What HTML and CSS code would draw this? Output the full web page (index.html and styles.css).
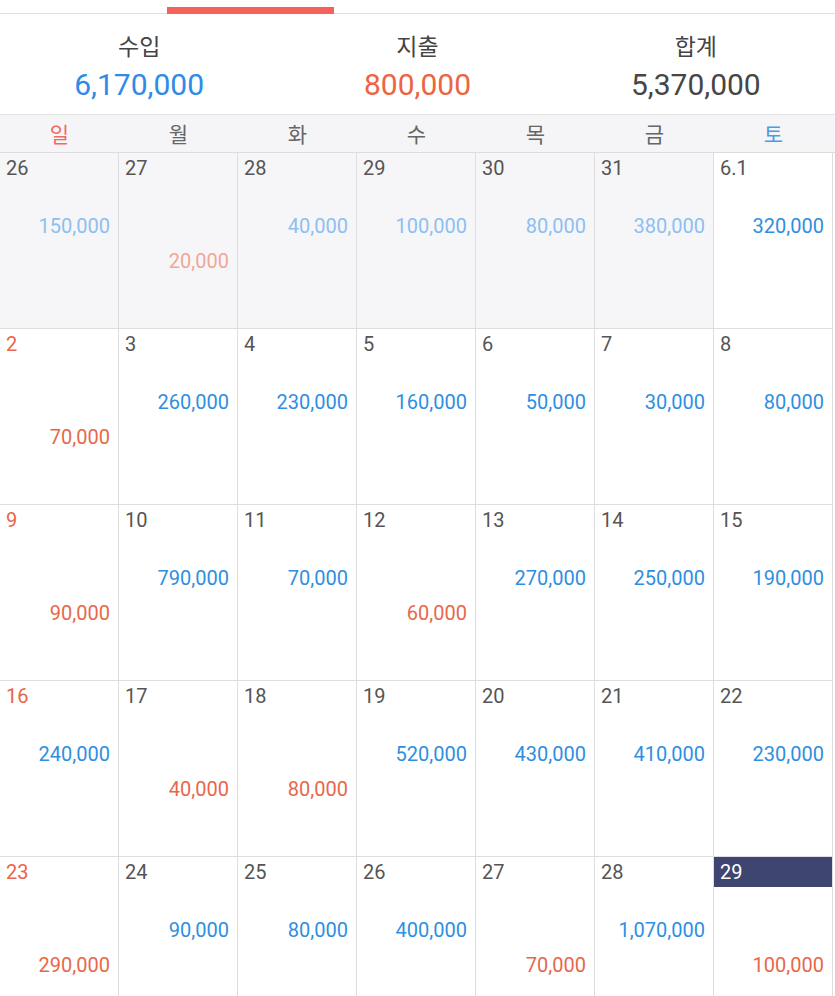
FILE: index.html
```html
<!DOCTYPE html>
<html lang="ko">
<head>
<meta charset="utf-8">
<link rel="stylesheet" href="styles.css">
</head>
<body>
<div class="app">
  <div class="tabs">
    <div class="tab"></div>
    <div class="tab active"><span class="indicator"></span></div>
    <div class="tab"></div>
    <div class="tab"></div>
    <div class="tab"></div>
  </div>
  <div class="summary">
    <div class="sum-col"><div class="sum-label">수입</div><div class="sum-value income">6,170,000</div></div>
    <div class="sum-col"><div class="sum-label">지출</div><div class="sum-value expense">800,000</div></div>
    <div class="sum-col"><div class="sum-label">합계</div><div class="sum-value total">5,370,000</div></div>
  </div>
  <div class="weekdays">
    <div class="wd sun">일</div>
    <div class="wd">월</div>
    <div class="wd">화</div>
    <div class="wd">수</div>
    <div class="wd">목</div>
    <div class="wd">금</div>
    <div class="wd sat">토</div>
  </div>
  <div class="grid">
    <div class="cell prev"><div class="date">26</div><div class="inc">150,000</div><div class="exp"></div></div>
    <div class="cell prev"><div class="date">27</div><div class="inc"></div><div class="exp">20,000</div></div>
    <div class="cell prev"><div class="date">28</div><div class="inc">40,000</div><div class="exp"></div></div>
    <div class="cell prev"><div class="date">29</div><div class="inc">100,000</div><div class="exp"></div></div>
    <div class="cell prev"><div class="date">30</div><div class="inc">80,000</div><div class="exp"></div></div>
    <div class="cell prev"><div class="date">31</div><div class="inc">380,000</div><div class="exp"></div></div>
    <div class="cell"><div class="date">6.1</div><div class="inc">320,000</div><div class="exp"></div></div>

    <div class="cell"><div class="date sun">2</div><div class="inc"></div><div class="exp">70,000</div></div>
    <div class="cell"><div class="date">3</div><div class="inc">260,000</div><div class="exp"></div></div>
    <div class="cell"><div class="date">4</div><div class="inc">230,000</div><div class="exp"></div></div>
    <div class="cell"><div class="date">5</div><div class="inc">160,000</div><div class="exp"></div></div>
    <div class="cell"><div class="date">6</div><div class="inc">50,000</div><div class="exp"></div></div>
    <div class="cell"><div class="date">7</div><div class="inc">30,000</div><div class="exp"></div></div>
    <div class="cell"><div class="date">8</div><div class="inc">80,000</div><div class="exp"></div></div>

    <div class="cell"><div class="date sun">9</div><div class="inc"></div><div class="exp">90,000</div></div>
    <div class="cell"><div class="date">10</div><div class="inc">790,000</div><div class="exp"></div></div>
    <div class="cell"><div class="date">11</div><div class="inc">70,000</div><div class="exp"></div></div>
    <div class="cell"><div class="date">12</div><div class="inc"></div><div class="exp">60,000</div></div>
    <div class="cell"><div class="date">13</div><div class="inc">270,000</div><div class="exp"></div></div>
    <div class="cell"><div class="date">14</div><div class="inc">250,000</div><div class="exp"></div></div>
    <div class="cell"><div class="date">15</div><div class="inc">190,000</div><div class="exp"></div></div>

    <div class="cell"><div class="date sun">16</div><div class="inc">240,000</div><div class="exp"></div></div>
    <div class="cell"><div class="date">17</div><div class="inc"></div><div class="exp">40,000</div></div>
    <div class="cell"><div class="date">18</div><div class="inc"></div><div class="exp">80,000</div></div>
    <div class="cell"><div class="date">19</div><div class="inc">520,000</div><div class="exp"></div></div>
    <div class="cell"><div class="date">20</div><div class="inc">430,000</div><div class="exp"></div></div>
    <div class="cell"><div class="date">21</div><div class="inc">410,000</div><div class="exp"></div></div>
    <div class="cell"><div class="date">22</div><div class="inc">230,000</div><div class="exp"></div></div>

    <div class="cell"><div class="date sun">23</div><div class="inc"></div><div class="exp">290,000</div></div>
    <div class="cell"><div class="date">24</div><div class="inc">90,000</div><div class="exp"></div></div>
    <div class="cell"><div class="date">25</div><div class="inc">80,000</div><div class="exp"></div></div>
    <div class="cell"><div class="date">26</div><div class="inc">400,000</div><div class="exp"></div></div>
    <div class="cell"><div class="date">27</div><div class="inc"></div><div class="exp">70,000</div></div>
    <div class="cell"><div class="date">28</div><div class="inc">1,070,000</div><div class="exp"></div></div>
    <div class="cell"><div class="date today">29</div><div class="inc"></div><div class="exp">100,000</div></div>
  </div>
</div>
</body>
</html>
```

FILE: styles.css
```css
html, body {
  margin: 0;
  padding: 0;
  background: #ffffff;
}
body {
  width: 835px;
  height: 996px;
  overflow: hidden;
  font-family: Roboto, "Noto Sans CJK KR", sans-serif;
  color: #555555;
}
.app {
  width: 835px;
}
.tabs {
  display: flex;
  height: 13px;
  border-bottom: 1px solid #e0e0e0;
}
.tab {
  width: 167px;
  display: flex;
  align-items: flex-end;
}
.indicator {
  display: block;
  width: 167px;
  height: 7px;
  margin-bottom: -1px;
  background: #f5625a;
}
.summary {
  display: flex;
  padding: 16px 0 10px;
}
.sum-col {
  flex: 1;
  text-align: center;
}
.sum-label {
  font-family: "Noto Sans CJK KR", sans-serif;
  font-size: 23px;
  line-height: 30px;
  color: #444444;
}
.sum-value {
  margin-top: 6px;
  font-size: 30px;
  line-height: 38px;
}
.sum-value.income { color: #2e8be6; }
.sum-value.expense { color: #ec6441; }
.sum-value.total { color: #464646; }
.weekdays {
  display: grid;
  grid-template-columns: repeat(7, 119px);
  height: 37px;
  background: #f5f5f7;
  border-top: 1px solid #e2e2e4;
  border-bottom: 1px solid #dcdcdc;
}
.wd {
  font-family: "Noto Sans CJK KR", sans-serif;
  font-size: 21px;
  line-height: 36px;
  text-align: center;
  color: #666666;
}
.wd.sun { color: #f06a63; }
.wd.sat { color: #4a9be8; }
.grid {
  display: grid;
  grid-template-columns: repeat(7, 119px);
  grid-auto-rows: 176px;
}
.cell {
  box-sizing: border-box;
  border-right: 1px solid #dedede;
  border-bottom: 1px solid #dedede;
  background: #ffffff;
}
.cell.prev {
  background: #f6f6f8;
}
.date {
  height: 30px;
  box-sizing: border-box;
  padding: 3px 6px 0;
  font-size: 20px;
  line-height: 24px;
  color: #555555;
}
.date.sun { color: #e8654a; }
.date.today {
  background: #3e4570;
  color: #ffffff;
}
.inc, .exp {
  height: 35px;
  padding-right: 8px;
  font-size: 20px;
  line-height: 35px;
  text-align: right;
}
.inc {
  margin-top: 26px;
  color: #2e8fe0;
}
.exp {
  color: #e8674a;
}
.prev .inc { color: #8dbff0; }
.prev .exp { color: #f2a698; }
```
